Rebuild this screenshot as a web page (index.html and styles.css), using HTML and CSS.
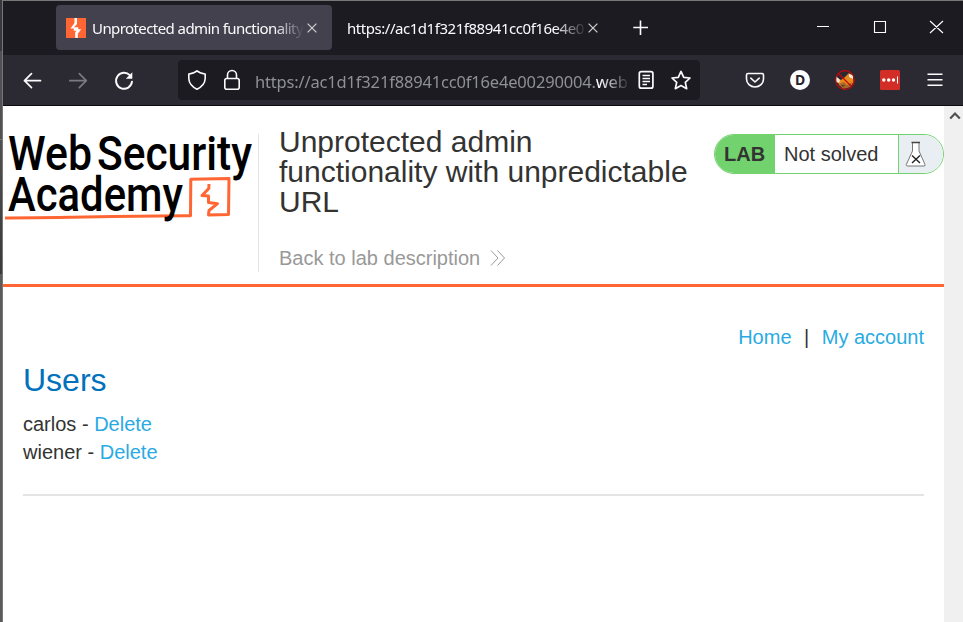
FILE: index.html
```html
<!DOCTYPE html>
<html lang="en">
<head>
<meta charset="utf-8">
<title>Unprotected admin functionality with unpredictable URL</title>
<link rel="stylesheet" href="styles.css">
</head>
<body>
<div class="desktop-edge"><i class="edge-a"></i><i class="edge-b"></i><i class="edge-c"></i><i class="edge-d"></i></div>
<div class="window">
  <div class="tabbar">
    <div class="tab active">
      <svg class="favicon" width="20" height="20" viewBox="0 0 20 20"><rect width="20" height="20" fill="#ff6633"/><path d="M8.500 0H11V6L8 9.300H12.300V11.200H15.200L11.800 15.800V20H9.200V14L10.800 12.700H7.800V10.500H4.500L8.500 5Z" fill="#fff"/></svg>
      <span class="tab-title t1">Unprotected admin functionality</span>
      <svg class="x" width="10" height="10" viewBox="0 0 10 10"><path d="M.6.6 9.4 9.4M9.4.6.6 9.4" /></svg>
    </div>
    <div class="tab">
      <span class="tab-title t2">https://ac1d1f321f88941cc0f16e4e0</span>
      <svg class="x" width="10" height="10" viewBox="0 0 10 10"><path d="M.6.6 9.4 9.4M9.4.6.6 9.4" /></svg>
    </div>
    <svg class="plus" width="16" height="16" viewBox="0 0 16 16"><path d="M7.500 .5V15M.3 7.500H15" stroke="#fbfbfe" stroke-width="1.600"/></svg>
    <svg class="controls" width="128" height="16" viewBox="0 0 128 16"><g fill="none" stroke="#fff" stroke-width="1.1"><path d="M0 6.500H12M57.500 1.500H68.500V12.500H57.500ZM113 1 126 13M126 1 113 13"/></g></svg>
  </div>
  <div class="toolbar">
    <svg class="nav" width="112" height="22" viewBox="0 0 112 22"><g transform="translate(-.7 .7)"><g fill="none" stroke-width="1.7" stroke-linecap="round" stroke-linejoin="round"><path stroke="#fbfbfe" d="M20 11H4M11 4 4 11 11 18" transform="translate(-.8 0)"/><path stroke="#7b7a81" d="M49 11H65M58.500 4 65.500 11 58.500 18" transform="translate(-.5 0)"/><path stroke="#fbfbfe" stroke-width="1.9" d="M110.700 12A8 8 0 1 1 108.500 5.500"/></g><path d="M111 2.500V9H104.500Z" fill="#fbfbfe"/></g></svg>
    <div class="urlbar">
      <svg class="ident" width="54" height="22" viewBox="0 0 54 22"><g fill="none" stroke="#fbfbfe" stroke-width="1.6" stroke-linejoin="round"><path d="M10 1.800C7.500 4 4.500 4.500 1.800 5V9.500C2 14 4.500 17.500 10 20.200C15.500 17.500 18 14 18.200 9.500V5C15.500 4.500 12.500 4 10 1.800Z"/><rect x="37.800" y="9.500" width="14.400" height="10.700" rx="2"/><path d="M40.500 9.500V6A4.500 4.500 0 0 1 49.500 6V9.500"/></g></svg>
      <span class="url"><span>https://ac1d1f321f88941cc0f16e4e00290004.</span><b>web</b></span>
      <svg class="page-actions" width="56" height="22" viewBox="0 0 56 22"><g fill="none" stroke="#fbfbfe" stroke-width="1.7" stroke-linejoin="round"><rect x="2.300" y="2.700" width="13.600" height="16.500" rx="2"/><path stroke-width="1.400" d="M5.500 6.500H13M5.500 9.500H13M5.500 12.500H13M5.500 15.500H10"/><path d="M43 1.700 45.700 7.600 52 8.300 47.300 12.700 48.700 19 43 15.800 37.300 19 38.700 12.700 34 8.300 40.300 7.600Z" transform="translate(1 .7)"/></g></svg>
    </div>
    <div class="extensions">
      <svg width="20" height="20" viewBox="0 0 20 20"><path d="M3 3.500H17Q18.500 3.500 18.500 5V9A8.500 8 0 0 1 1.500 9V5Q1.500 3.500 3 3.500ZM5.800 8.200 10 12 14.200 8.200" fill="none" stroke="#fbfbfe" stroke-width="1.600" stroke-linecap="round" stroke-linejoin="round"/></svg>
      <span class="dot-d">D</span>
      <svg width="20" height="20" viewBox="0 0 20 20"><path d="M2 8 6 10 10 7 14 3 18 7 18.500 12 15 17 8 18 4 15Z" fill="#e88b1c"/><path d="M1 6 5 10 4 13 1 12ZM14 4 18 5 18 9 14 7Z" fill="#f4ead9"/><path d="M4 14 9 12 12 15 17 12 15 17 8 19Z" fill="#a9682a"/><path d="M6 15H10L8 17Z" fill="#593d2c"/><circle cx="10" cy="10" r="9.300" fill="none" stroke="#c4080b" stroke-width="1.200"/><path d="M3.500 3.500 16.500 16.500" stroke="#c4080b" stroke-width="1.300"/></svg>
      <svg width="20" height="20" viewBox="0 0 20 20"><rect width="20" height="20" rx="1.500" fill="#d32d27"/><g fill="#fff"><circle cx="3.800" cy="10" r="1.700"/><circle cx="8.700" cy="10" r="1.700"/><circle cx="13.500" cy="10" r="1.700"/><path d="M17 6.500H18V13.500H17Z"/></g></svg>
      <svg width="20" height="20" viewBox="0 0 20 20"><path d="M2.500 4.300H17.500M2.500 9.800H17.500M2.500 15.200H17.500" stroke="#fbfbfe" stroke-width="1.500"/></svg>
    </div>
  </div>
  <div class="viewport">
    <main>
      <header>
        <svg class="logo" width="255" height="100" viewBox="3 125 255 100" role="img" aria-label="Web Security Academy">
          <path d="M5 217.900C70 218 130 215.500 190.500 215.700L190.800 179.300 229 178.500 228.500 214.500 208.500 215 209 210.500 217.500 203.700 208.500 202.500 208.500 196 202 195.500 208.800 188.500 209 184" fill="none" stroke="#ff6633" stroke-width="3" stroke-linejoin="round"/>
          <g class="wordmark"><text x="8" y="170" textLength="84" lengthAdjust="spacingAndGlyphs">Web</text><text x="97" y="170" textLength="155" lengthAdjust="spacingAndGlyphs">Security</text><text x="8" y="211" textLength="175" lengthAdjust="spacingAndGlyphs">Academy</text></g>
        </svg>
        <div class="title">
          <h2>Unprotected admin functionality with unpredictable URL</h2>
          <a class="back">Back to lab description<svg width="16" height="16" viewBox="0 0 16 16"><path d="M1 .5 8 8 1 15.500M7.500 .5 14.500 8 7.500 15.500" fill="none" stroke="#999" stroke-width="1"/></svg></a>
        </div>
        <div class="status"><strong>LAB</strong><span>Not solved</span><i><svg width="22" height="26" viewBox="0 0 22 26"><path d="M7.500 1.500V10L1.300 23.500Q1 25 2.500 25H19Q20.500 25 20 23.500L14 10V1.500" fill="#fff" stroke="#777" stroke-width="1"/><path d="M6.500 1.500H15" stroke="#444" stroke-width="1.300"/><path d="M7 14.500 15 22M15 14.500 7 22" stroke="#222" stroke-width="1.400"/></svg></i></div>
      </header>
      <section>
        <nav><a>Home</a><span>|</span><a>My account</a></nav>
        <h1>Users</h1>
        <p>carlos - <a>Delete</a></p>
        <p>wiener - <a>Delete</a></p>
        <hr>
      </section>
    </main>
    <div class="scrollbar"><svg width="12" height="9" viewBox="0 0 12 9"><path d="M1.200 7.500 6 2.500 10.800 7.500" fill="none" stroke="#505050" stroke-width="2.200"/></svg></div>
  </div>
</div>
</body>
</html>
```
FILE: styles.css
```css
* { box-sizing: border-box; }
body { margin: 0; width: 963px; height: 622px; display: flex; overflow: hidden; background: #fff; font-family: "Liberation Sans", Arial, sans-serif; }
svg { display: block; flex: none; }
.desktop-edge { width: 3px; border-right: 1px solid #777; display: flex; flex-direction: column; }
.edge-a { height: 51px; background: #38383e; }
.edge-b { height: 88px; background: #505055; }
.edge-c { height: 135px; background: linear-gradient(#505050, #3a3a3a); border-top: 1px solid #777; }
.edge-d { flex: 1; background: #5b5b5b; }
.window { width: 960px; border-top: 1px solid #777; display: flex; flex-direction: column; }
.tabbar { height: 54px; background: #1c1b22; display: flex; align-items: center; padding-left: 53px; color: #fbfbfe; }
.tab { height: 45px; width: 276px; margin-bottom: 1px; border-radius: 4px; display: flex; align-items: center; padding: 1px 0 0 10px; font: 15px "Noto Sans", sans-serif; }
.tab.active { background: #42414d; }
.tab-title { white-space: nowrap; overflow: hidden; flex: none; height: 24px; line-height: 24px; }
.t1 { width: 212px; margin-left: 6px; letter-spacing: -.58px; -webkit-mask-image: linear-gradient(90deg, #000 182px, transparent 212px); mask-image: linear-gradient(90deg, #000 182px, transparent 212px); }
.t2 { width: 238px; margin-left: 5px; letter-spacing: -.46px; -webkit-mask-image: linear-gradient(90deg, #000 208px, transparent 240px); mask-image: linear-gradient(90deg, #000 208px, transparent 240px); }
.x { margin-left: 3px; fill: none; stroke: #ccc; stroke-width: 1.3; }
.plus { margin-left: 25px; }
.controls { margin-left: auto; margin-right: 18px; }
.toolbar { height: 51px; background: #2b2a33; border-bottom: 1px solid #0c0c0d; display: flex; align-items: center; padding-left: 19px; }
.urlbar { width: 522px; height: 40px; margin-left: 44px; background: #1c1b22; border-radius: 4px; display: flex; align-items: center; padding-left: 9px; }
.url { width: 372px; margin-left: 14px; margin-top: 2px; overflow: hidden; white-space: nowrap; color: #8f8f96; font: 16.5px "Noto Sans", sans-serif; letter-spacing: -.17px; -webkit-mask-image: linear-gradient(90deg, #000 345px, transparent 376px); mask-image: linear-gradient(90deg, #000 345px, transparent 376px); }
.url b { font-weight: 400; color: #fbfbfe; }
.page-actions { margin-left: 10px; }
.extensions { display: flex; gap: 25px; margin-left: 45px; }
.dot-d { width: 20px; height: 20px; border-radius: 50%; background: #fff; color: #24232a; text-align: center; font: bold 14px/20px "Noto Sans", sans-serif; }
.viewport { flex: 1; display: flex; }
main { width: 941px; }
.scrollbar { flex: 1; background: #f0f0f0; padding: 5px 0 0 4.5px; }
header { height: 181px; border-bottom: 3px solid #ff6633; display: flex; }
.logo { margin-top: 19px; }
.title { width: 436px; height: 138px; margin-top: 28px; padding-left: 20px; border-left: 1px solid #e4e4e4; }
h2 { margin: -7px 0 0; font-size: 30px; line-height: 30px; font-weight: 400; color: #333332; }
.back { display: flex; align-items: center; gap: 10px; margin-top: 29px; font-size: 20px; line-height: 24px; white-space: nowrap; }
.status { width: 230px; height: 40px; margin: 28px 0 0 20px; border: 1px solid #72d36e; border-radius: 20px; overflow: hidden; display: flex; color: #333332; font-size: 20px; line-height: 38px; }
.status strong { width: 60px; padding-left: 9px; background: #72d36e; }
.status span { width: 123px; padding-left: 9px; }
.status i { flex: 1; border-left: 1px solid #72d36e; background: #e9eef2; padding: 6px 0 0 6px; }
section { padding: 36px 20px 0; font-size: 20px; color: #333332; }
nav { display: flex; justify-content: flex-end; gap: 12.5px; line-height: 28px; }
a { color: #29abe2; }
a.back { color: #999; }
h1 { margin: 10px 0 11px; font-size: 32px; line-height: 38px; font-weight: 400; color: #0071bc; }
p { margin: 0; line-height: 28px; }
hr { margin: 28px 0 0; border: 0; height: 2px; background: #e4e4e4; }
.wordmark { font-family: Roboto, sans-serif; font-size: 48px; font-weight: 500; }
```
